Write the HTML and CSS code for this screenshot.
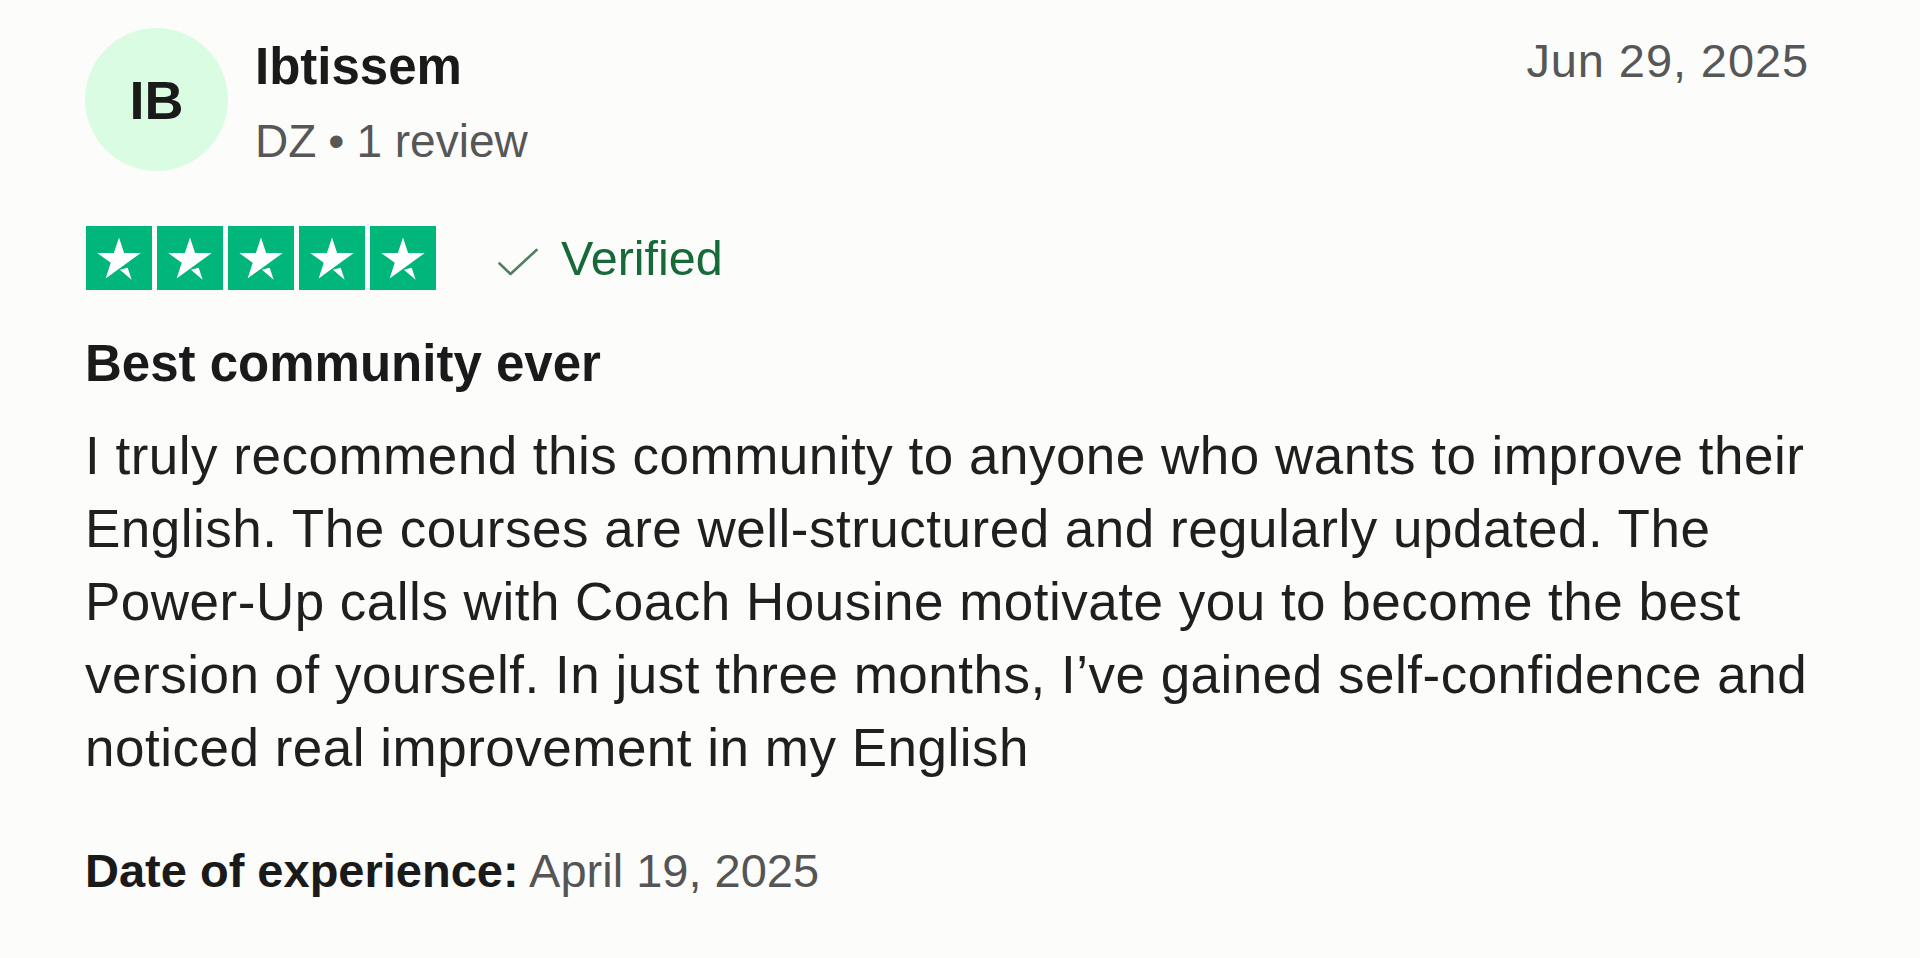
FILE: index.html
```html
<!DOCTYPE html>
<html lang="en">
<head>
<meta charset="utf-8">
<title>Review</title>
<link rel="stylesheet" href="styles.css">
</head>
<body>
<article class="review">
  <header class="review-header">
    <div class="consumer">
      <div class="avatar">IB</div>
      <div class="consumer-info">
        <div class="consumer-name">Ibtissem</div>
        <div class="consumer-meta"><span>DZ</span><span class="dot">•</span><span>1 review</span></div>
      </div>
    </div>
    <time class="review-date">Jun 29, 2025</time>
  </header>

  <div class="rating-row">
    <div class="stars">
      <span class="star"><svg viewBox="0 0 96 96"><path fill="#fff" d="M81.6 40.4H55.9L48 16.2L40.1 40.4H14.4L35.2 55.4L27.3 79.6L48.1 64.6L60.9 55.4Z"/><path fill="#fff" d="M49.4 66.3L61.5 63.2L67.6 81.5Z"/></svg></span>
      <span class="star"><svg viewBox="0 0 96 96"><path fill="#fff" d="M81.6 40.4H55.9L48 16.2L40.1 40.4H14.4L35.2 55.4L27.3 79.6L48.1 64.6L60.9 55.4Z"/><path fill="#fff" d="M49.4 66.3L61.5 63.2L67.6 81.5Z"/></svg></span>
      <span class="star"><svg viewBox="0 0 96 96"><path fill="#fff" d="M81.6 40.4H55.9L48 16.2L40.1 40.4H14.4L35.2 55.4L27.3 79.6L48.1 64.6L60.9 55.4Z"/><path fill="#fff" d="M49.4 66.3L61.5 63.2L67.6 81.5Z"/></svg></span>
      <span class="star"><svg viewBox="0 0 96 96"><path fill="#fff" d="M81.6 40.4H55.9L48 16.2L40.1 40.4H14.4L35.2 55.4L27.3 79.6L48.1 64.6L60.9 55.4Z"/><path fill="#fff" d="M49.4 66.3L61.5 63.2L67.6 81.5Z"/></svg></span>
      <span class="star"><svg viewBox="0 0 96 96"><path fill="#fff" d="M81.6 40.4H55.9L48 16.2L40.1 40.4H14.4L35.2 55.4L27.3 79.6L48.1 64.6L60.9 55.4Z"/><path fill="#fff" d="M49.4 66.3L61.5 63.2L67.6 81.5Z"/></svg></span>
    </div>
    <div class="verified">
      <svg class="check" viewBox="0 0 40 28"><path d="M1.5 15.5L12.5 26L38.5 2" fill="none" stroke="#4f8060" stroke-width="2.6" stroke-linecap="round" stroke-linejoin="round"/></svg>
      <span>Verified</span>
    </div>
  </div>

  <h2 class="review-title">Best community ever</h2>
  <p class="review-text">I truly recommend this community to anyone who wants to improve their English. The courses are well-structured and regularly updated. The Power-Up calls with Coach Housine motivate you to become the best version of yourself. In just three months, I’ve gained self-confidence and noticed real improvement in my English</p>

  <p class="experience"><b>Date of experience:</b> April 19, 2025</p>
</article>
</body>
</html>
```

FILE: styles.css
```css
html, body {
  margin: 0;
  padding: 0;
  background: #fcfcfb;
}

body {
  font-family: "Liberation Sans", Arial, sans-serif;
  color: #1c1c1c;
}

.review {
  padding: 28px 111px 0 85px;
}

.review-header {
  display: flex;
  justify-content: space-between;
  align-items: flex-start;
}

.consumer {
  display: flex;
  align-items: flex-start;
  gap: 27px;
}

.avatar {
  width: 143px;
  height: 143px;
  border-radius: 50%;
  background: #dafce3;
  display: flex;
  align-items: center;
  justify-content: center;
  font-weight: 700;
  font-size: 54px;
  color: #1a1a1a;
}

.consumer-info {
  padding-top: 9px;
}

.consumer-name {
  font-size: 51px;
  line-height: 60px;
  font-weight: 700;
  color: #1a1a1a;
}

.consumer-meta {
  margin-top: 16px;
  font-size: 46px;
  line-height: 56px;
  color: #575757;
  display: flex;
}

.consumer-meta .dot {
  margin: 0 12px;
}

.review-date {
  margin-top: 3px;
  font-size: 47px;
  line-height: 60px;
  color: #575757;
  letter-spacing: 0.9px;
}

.rating-row {
  margin-top: 55px;
  display: flex;
  align-items: center;
  gap: 62px;
}

.stars {
  display: flex;
  gap: 5px;
  margin-left: 1px;
}

.star {
  width: 66px;
  height: 64px;
  background: #00b67a;
  display: flex;
  align-items: center;
  justify-content: center;
}

.star svg {
  width: 62px;
  height: 62px;
  display: block;
}

.verified {
  display: flex;
  align-items: center;
  gap: 23px;
  font-size: 48.5px;
  line-height: 60px;
  color: #166a3a;
}

.check {
  width: 40px;
  height: 28px;
  display: block;
  margin-top: 8px;
}

.review-title {
  margin: 44px 0 0;
  font-size: 51px;
  line-height: 60px;
  font-weight: 700;
  color: #1a1a1a;
}

.review-text {
  margin: 25px 0 0;
  width: 1750px;
  font-size: 53px;
  line-height: 73px;
  letter-spacing: 0.5px;
  color: #1f1f1f;
}

.experience {
  margin: 57px 0 0;
  font-size: 47px;
  line-height: 60px;
  color: #555;
}

.experience b {
  color: #1a1a1a;
  font-weight: 700;
}
```
